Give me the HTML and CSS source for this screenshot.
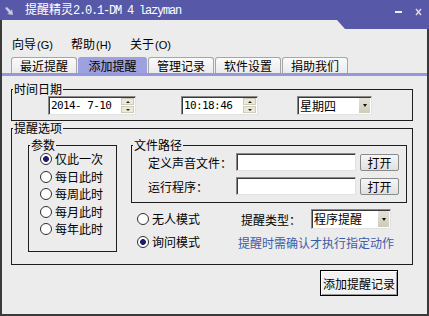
FILE: index.html
```html
<!DOCTYPE html>
<html lang="zh-CN">
<head>
<meta charset="utf-8">
<title>提醒精灵</title>
<link rel="stylesheet" href="styles.css">
</head>
<body>
<div class="window">
  <div class="titlebar">
    <svg class="appicon" viewBox="0 0 9 9" width="9" height="9"><path d="M0 1 L2 0 L6 4 L7 2 L8 8 L2 7 L4 6 Z" fill="#c9c9dc"/></svg>
    <span class="title">提醒精灵<span class="latin">2.0.1-DM 4 lazyman</span></span>
    <svg class="ctrls" viewBox="0 0 28 8" width="28" height="8"><rect x="0" y="3" width="7" height="2" fill="#eeeef8"/><path d="M21 1 L26 7 M26 1 L21 7" stroke="#dcdcec" stroke-width="1.4" fill="none"/></svg>
  </div>
  <div class="main">
    <div class="menubar">
      <span class="menu">向导<span class="acc">(G)</span></span>
      <span class="menu">帮助<span class="acc">(H)</span></span>
      <span class="menu">关于<span class="acc">(O)</span></span>
    </div>
    <div class="tabs">
      <div class="tab">最近提醒</div>
      <div class="tab active">添加提醒</div>
      <div class="tab">管理记录</div>
      <div class="tab">软件设置</div>
      <div class="tab">捐助我们</div>
    </div>
    <div class="content">
      <fieldset class="group g-time">
        <legend>时间日期</legend>
        <div class="time-inner">
          <div class="spin date"><span class="val">2014- 7-10</span><span class="spinbtns"><span class="sb up"></span><span class="sb down"></span></span></div>
          <div class="spin time"><span class="val">10:18:46</span><span class="spinbtns"><span class="sb up"></span><span class="sb down"></span></span></div>
          <div class="combo week"><span class="cval">星期四</span><span class="drop"></span></div>
        </div>
      </fieldset>
      <fieldset class="group g-opts">
        <legend>提醒选项</legend>
        <div class="opts-row">
          <fieldset class="group g-param">
            <legend>参数</legend>
            <div class="param-inner">
              <div class="radio"><span class="rdot on"></span><span>仅此一次</span></div>
              <div class="radio"><span class="rdot"></span><span>每日此时</span></div>
              <div class="radio"><span class="rdot"></span><span>每周此时</span></div>
              <div class="radio"><span class="rdot"></span><span>每月此时</span></div>
              <div class="radio"><span class="rdot"></span><span>每年此时</span></div>
            </div>
          </fieldset>
          <div class="right">
            <fieldset class="group g-path">
              <legend>文件路径</legend>
              <div class="path-inner">
                <div class="frow"><span class="flabel">定义声音文件：</span><span class="field"></span><span class="btn">打开</span></div>
                <div class="frow"><span class="flabel">运行程序：</span><span class="field"></span><span class="btn">打开</span></div>
              </div>
            </fieldset>
            <div class="mrow m1">
              <div class="radio mradio"><span class="rdot"></span><span>无人模式</span></div>
              <span class="tlabel">提醒类型：</span>
              <div class="combo type"><span class="cval">程序提醒</span><span class="drop"></span></div>
            </div>
            <div class="mrow m2">
              <div class="radio mradio2"><span class="rdot on"></span><span>询问模式</span></div>
              <span class="hint">提醒时需确认才执行指定动作</span>
            </div>
          </div>
        </div>
      </fieldset>
      <div class="actions">
        <button class="primary">添加提醒记录</button>
      </div>
    </div>
  </div>
</div>
</body>
</html>
```
FILE: styles.css
```css
* { box-sizing: border-box; }
html, body { margin: 0; padding: 0; }
body {
  width: 429px;
  height: 316px;
  overflow: hidden;
  background: #ececec;
  font-family: "Noto Sans CJK SC", "Noto Sans", sans-serif;
  font-size: 12px;
  color: #000;
}
.window { width: 429px; height: 316px; display: flex; flex-direction: column; }

/* title bar */
.titlebar {
  position: relative;
  flex: none;
  height: 20px;
  background: #5858a8;
  color: #fff;
  display: flex;
  align-items: center;
  padding-left: 5px;
}
.titlebar::after {
  content: "";
  position: absolute;
  top: 20px;
  right: 0;
  width: 92px;
  height: 9px;
  background: #5858a8;
  clip-path: polygon(0 0, 100% 0, 100% 100%, 8px 100%);
}
.appicon { flex: none; margin-top: 3px; }
.title { margin-left: 11px; font-size: 12px; line-height: 20px; white-space: nowrap; }
.latin { font-family: "Liberation Mono", monospace; font-size: 12px; letter-spacing: -1.2px; }
.ctrls { flex: none; margin-left: auto; margin-right: 6px; margin-top: 4px; }

/* main frame */
.main {
  flex: 1;
  border: 2px solid #3a3a3a;
  border-top: 0;
}
.menubar {
  display: flex;
  margin-top: 15px;
  padding-left: 10px;
  height: 18px;
  line-height: 18px;
}
.menu { width: 59px; white-space: nowrap; }
.acc { font-family: "Liberation Sans", sans-serif; font-size: 11px; margin-left: 1px; }

.tabs {
  display: flex;
  align-items: flex-end;
  gap: 1px;
  margin-top: 4px;
  padding-left: 9px;
  height: 19px;
  border-bottom: 3px solid #9599dc;
}
.tab {
  height: 16px;
  line-height: 15px;
  padding: 0 8px;
  border: 1px solid #a6a6a6;
  border-bottom: 0;
  border-radius: 3px 3px 0 0;
  background: linear-gradient(#fbfbfb, #ebebeb);
  white-space: nowrap;
}
.tab.active { background: #9da1e0; border-color: #9da1e0; padding: 0 9.5px; }

.content { padding-left: 9px; margin-top: 6px; }

fieldset.group {
  margin: 0;
  padding: 0;
  min-width: 0;
  border: 1px solid #1e1e1e;
}
fieldset.group > legend {
  padding: 0 1px;
  margin-left: 1px;
  line-height: 14px;
  font-size: 12px;
}

/* time group */
.g-time { width: 402px; }
.time-inner { display: flex; align-items: center; padding: 0 0 5px 36px; }
.spin, .combo, .field {
  background: #fff;
  border: 1px solid;
  border-color: #8a8a8a #e2e2e2 #e2e2e2 #8a8a8a;
  box-shadow: inset 1px 1px 0 #3a3a3a;
}
.spin { display: flex; height: 19px; }
.spin .val {
  flex: 1;
  padding-left: 2px;
  font-family: "DejaVu Sans Mono", monospace;
  font-size: 11px;
  letter-spacing: -0.6px;
  line-height: 17px;
  white-space: pre;
}
.date { width: 88px; }
.time { width: 77px; margin-left: 45px; }
.spinbtns { display: flex; flex-direction: column; width: 13px; margin: 1px 1px 1px 0; gap: 1px; }
.sb {
  flex: 1;
  background: #ece9d8;
  border: 1px solid #cfcbb8;
  display: flex;
  align-items: center;
  justify-content: center;
}
.sb::before { content: ""; width: 0; height: 0; border-left: 2px solid transparent; border-right: 2px solid transparent; }
.sb.up::before { border-bottom: 2px solid #222; }
.sb.down::before { border-top: 2px solid #222; }

.combo { display: flex; height: 19px; }
.cval { flex: 1; padding-left: 2px; line-height: 17px; white-space: nowrap; }
.drop {
  width: 11px;
  margin: 1px 1px 1px 0;
  background: linear-gradient(#e6e3d6, #cfcbba);
  display: flex;
  align-items: center;
  justify-content: center;
}
.drop::before { content: ""; border-left: 2.5px solid transparent; border-right: 2.5px solid transparent; border-top: 3px solid #111; }
.week { width: 75px; margin-left: 39px; }

/* options group */
.g-opts { width: 402px; margin-top: 8px; }
.opts-row { display: flex; align-items: flex-start; padding: 3px 0 12px 16px; }
.g-param { width: 89px; }
.param-inner { display: flex; flex-direction: column; gap: 3.5px; padding: 0 0 15px 11px; }
.radio { display: flex; align-items: center; gap: 3px; height: 14px; line-height: 14px; white-space: nowrap; }
.rdot {
  flex: none;
  width: 12px;
  height: 12px;
  border-radius: 50%;
  border: 1px solid #2e2e2e;
  background: #fff;
}
.rdot.on { background: radial-gradient(circle, #1c1c6a 0 2.6px, #fff 3.2px); }

.right { margin-left: 14px; width: 276px; }
.g-path { width: 276px; }
.path-inner { display: flex; flex-direction: column; gap: 6px; padding: 1px 0 7px 16px; }
.frow { display: flex; align-items: center; height: 18px; }
.flabel { width: 88px; white-space: nowrap; }
.field { width: 120px; height: 18px; }
.btn {
  width: 39px;
  height: 17px;
  margin-left: 4px;
  border: 1px solid #8a8a8a;
  border-radius: 2px;
  background: linear-gradient(#f6f6f6, #e0e0e0);
  text-align: center;
  line-height: 15px;
}

.mrow { display: flex; align-items: center; }
.m1 { margin-top: 6px; height: 20px; }
.m2 { margin-top: 6px; height: 14px; }
.mradio { margin-left: 6px; width: 104px; }
.mradio2 { margin-left: 6px; width: 101px; }
.tlabel { width: 70px; white-space: nowrap; }
.type { width: 80px; height: 20px; }
.hint { color: #3d5ca8; white-space: nowrap; }

/* bottom action */
.actions { display: flex; padding-left: 309px; margin-top: 5px; }
.primary {
  width: 78px;
  height: 26px;
  padding: 0;
  border: 1px solid #000;
  background: #f2f2f2;
  box-shadow: inset 1px 1px 0 #fff, inset -1px -1px 0 #9a9a9a;
  font-family: "Noto Sans CJK SC", sans-serif;
  font-size: 12px;
  color: #000;
}
```
